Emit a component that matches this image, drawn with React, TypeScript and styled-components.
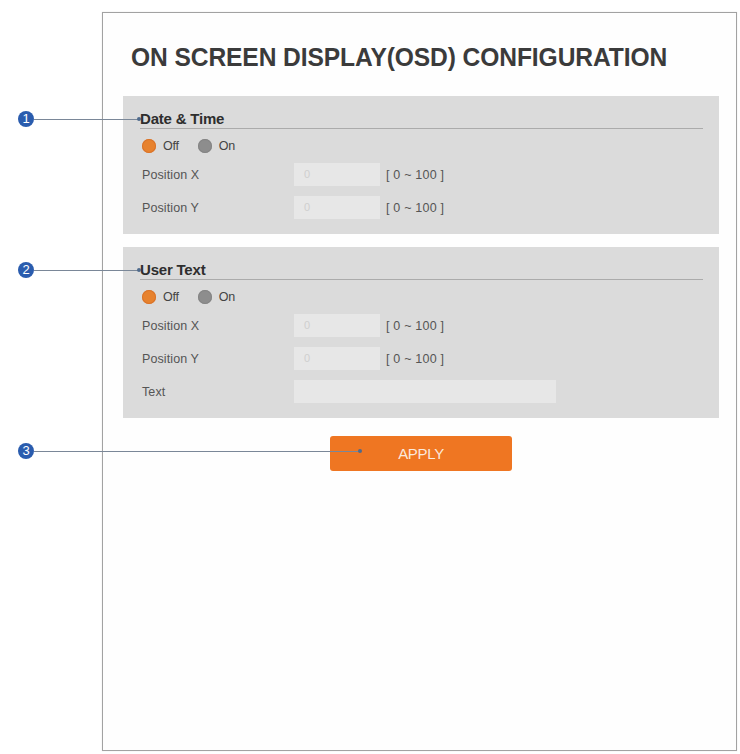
import { FC } from 'react';
import styled, { createGlobalStyle } from 'styled-components';

const GlobalStyle = createGlobalStyle`
  html, body {
    margin: 0;
    padding: 0;
    background: #ffffff;
  }
  body {
    font-family: 'Liberation Sans', Arial, sans-serif;
  }
`;

const Page = styled.div`
  position: relative;
  width: 740px;
  height: 754px;
  padding: 12px 0 0 102px;
  box-sizing: border-box;
`;

const Frame = styled.div`
  width: 635px;
  height: 739px;
  box-sizing: border-box;
  border: 1px solid #a2a2a2;
  box-shadow: 0 0 1px rgba(0, 0, 0, 0.15);
  padding: 31px 17px 0 20px;
  background: #fefefe;
`;

const Title = styled.h1`
  margin: 0 0 24px 8px;
  font-size: 24.6px;
  line-height: 28px;
  font-weight: bold;
  color: #3b3b3b;
  letter-spacing: -0.1px;
  transform: scaleY(1.06);
`;

const Panel = styled.section`
  background: #dbdbdb;
  padding: 14px 16px 15px 17px;
  & + & {
    margin-top: 13px;
  }
`;

const PanelHeading = styled.h2`
  margin: 0;
  font-size: 15px;
  line-height: 18px;
  font-weight: bold;
  color: #2e2e2e;
  letter-spacing: -0.2px;
  border-bottom: 1px solid #ababab;
`;

const RadioRow = styled.div`
  display: flex;
  align-items: center;
  height: 14px;
  margin: 10px 0 10px 2px;
`;

const RadioDot = styled.span<{ $on?: boolean }>`
  width: 14px;
  height: 14px;
  border-radius: 50%;
  margin-right: 7px;
  background: ${(p) => (p.$on ? '#e7822e' : '#8d8d8d')};
  box-shadow: inset 0 0 0 1px ${(p) => (p.$on ? '#d9732a' : '#858585')};
`;

const RadioLabel = styled.span`
  font-size: 12.5px;
  color: #444;
  margin-right: 19px;
  letter-spacing: -0.2px;
`;

const Fields = styled.div`
  display: flex;
  flex-direction: column;
  gap: 10px;
`;

const FieldRow = styled.div`
  display: grid;
  grid-template-columns: 148px 86px auto;
  align-items: center;
  column-gap: 6px;
  height: 23px;
`;

const FieldLabel = styled.span`
  font-size: 12.5px;
  color: #555;
  padding-left: 2px;
  letter-spacing: 0.1px;
`;

const Input = styled.div<{ $wide?: boolean }>`
  height: 23px;
  width: ${(p) => (p.$wide ? '262px' : '86px')};
  background: #e7e7e7;
  font-size: 11px;
  line-height: 23px;
  color: #cfcfcf;
  padding-left: 10px;
  box-sizing: border-box;
`;

const Range = styled.span`
  font-size: 12.5px;
  color: #555;
  letter-spacing: 0.2px;
`;

const ButtonBar = styled.div`
  display: flex;
  justify-content: center;
  margin-top: 18px;
`;

const ApplyButton = styled.button`
  width: 182px;
  height: 35px;
  border: none;
  border-radius: 3px;
  background: #ef7622;
  color: #fbe9dc;
  font-family: 'Liberation Sans', Arial, sans-serif;
  font-size: 15px;
  letter-spacing: -0.3px;
  padding: 0;
`;

// numbered markers with leader lines, drawn over the frame
const Callout = styled.div`
  position: absolute;
  left: 18px;
  display: flex;
  align-items: center;
  height: 16px;
`;

const Badge = styled.span`
  width: 16px;
  height: 16px;
  border-radius: 50%;
  background: #2a5cae;
  color: #ffffff;
  font-size: 13px;
  line-height: 16px;
  text-align: center;
  flex-shrink: 0;
`;

const Leader = styled.span`
  height: 1px;
  background: #7a8798;
  position: relative;
  &::after {
    content: '';
    position: absolute;
    right: -2px;
    top: -1.5px;
    width: 4px;
    height: 4px;
    border-radius: 50%;
    background: #4f6a8c;
  }
`;

type Field = { label: string; wide?: boolean; range?: boolean };

const OsdPanel: FC<{ title: string; fields: Field[] }> = ({ title, fields }) => (
  <Panel>
    <PanelHeading>{title}</PanelHeading>
    <RadioRow>
      <RadioDot $on />
      <RadioLabel>Off</RadioLabel>
      <RadioDot />
      <RadioLabel>On</RadioLabel>
    </RadioRow>
    <Fields>
      {fields.map((f) => (
        <FieldRow key={f.label}>
          <FieldLabel>{f.label}</FieldLabel>
          <Input $wide={f.wide}>{f.wide ? '' : '0'}</Input>
          {f.range ? <Range>[ 0 ~ 100 ]</Range> : <span />}
        </FieldRow>
      ))}
    </Fields>
  </Panel>
);

const callouts = [
  { id: 1, top: 111, length: 105 },
  { id: 2, top: 262, length: 105 },
  { id: 3, top: 443, length: 326 },
];

const App: FC = () => (
  <>
    <GlobalStyle />
    <Page>
      <Frame>
        <Title>ON SCREEN DISPLAY(OSD) CONFIGURATION</Title>
        <OsdPanel
          title="Date & Time"
          fields={[
            { label: 'Position X', range: true },
            { label: 'Position Y', range: true },
          ]}
        />
        <OsdPanel
          title="User Text"
          fields={[
            { label: 'Position X', range: true },
            { label: 'Position Y', range: true },
            { label: 'Text', wide: true },
          ]}
        />
        <ButtonBar>
          <ApplyButton>APPLY</ApplyButton>
        </ButtonBar>
      </Frame>
      {callouts.map((c) => (
        <Callout key={c.id} style={{ top: c.top }}>
          <Badge>{c.id}</Badge>
          <Leader style={{ width: c.length }} />
        </Callout>
      ))}
    </Page>
  </>
);

export default App;
